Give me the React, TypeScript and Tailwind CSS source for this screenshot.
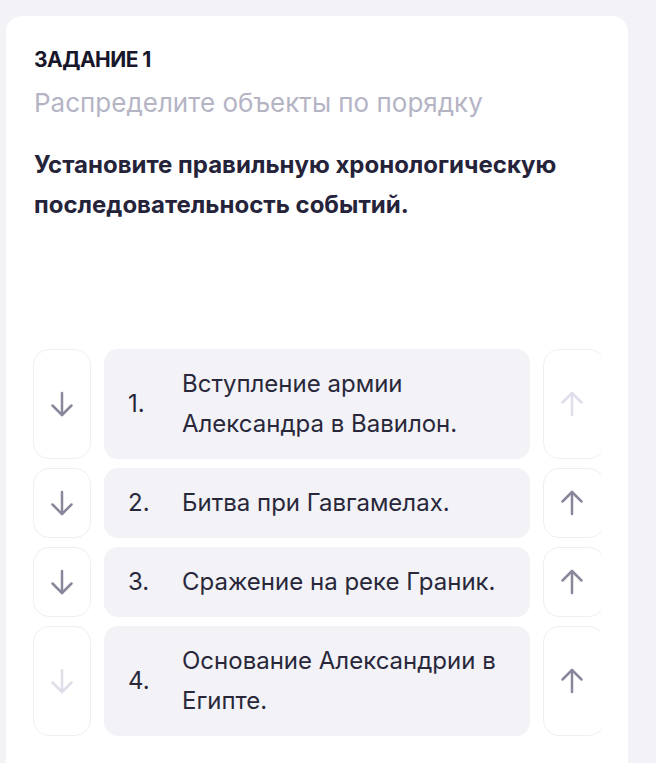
import React from 'react'

type Item = { id: number; text: string }

const items: Item[] = [
  { id: 1, text: 'Вступление армии Александра в Вавилон.' },
  { id: 2, text: 'Битва при Гавгамелах.' },
  { id: 3, text: 'Сражение на реке Граник.' },
  { id: 4, text: 'Основание Александрии в Египте.' },
]

function Arrow({ dir, disabled }: { dir: 'up' | 'down'; disabled: boolean }) {
  return (
    <svg
      width="24"
      height="26"
      viewBox="0 0 24 26"
      fill="none"
      stroke={disabled ? '#dfdee8' : '#88879c'}
      strokeWidth="2.5"
      strokeLinecap="round"
      strokeLinejoin="round"
      className={dir === 'up' ? 'rotate-180' : ''}
    >
      <path d="M12 2v22" />
      <path d="M2.5 14.5 12 24l9.5-9.5" />
    </svg>
  )
}

function MoveButton({ dir, disabled, wide }: { dir: 'up' | 'down'; disabled: boolean; wide?: boolean }) {
  return (
    <button
      type="button"
      disabled={disabled}
      className={
        wide
          ? 'flex w-[62px] shrink-0 items-center justify-center rounded-2xl border border-[#efeef4] bg-white pr-1'
          : 'flex w-[58px] shrink-0 items-center justify-center rounded-2xl border border-[#efeef4] bg-white'
      }
    >
      <Arrow dir={dir} disabled={disabled} />
    </button>
  )
}

export default function App() {
  return (
    <div className="min-h-screen bg-[#f2f2f7] pt-4 pl-[6px]" style={{ fontFamily: 'Inter, "Noto Sans", sans-serif' }}>
      <div className="w-[622px] rounded-t-2xl bg-white px-7 pt-8 pb-12">
        {/* Task header */}
        <h2 className="text-[21px] font-bold uppercase leading-6 tracking-tight text-[#17162a]">Задание 1</h2>
        <p className="mt-[15px] text-[26px] leading-8 text-[#b5b4c5]">Распределите объекты по порядку</p>
        <p className="mt-[26px] text-[24px] font-bold leading-10 text-[#24233a]">
          Установите правильную хронологическую последовательность событий.
        </p>

        {/* Sortable list */}
        <div className="mt-[124px] -ml-px flex w-[568px] flex-col gap-[9px] overflow-hidden">
          {items.map((item, i) => (
            <div key={item.id} className="flex gap-[13px]">
              <MoveButton dir="down" disabled={i === items.length - 1} />
              <div className="flex w-[426px] shrink-0 items-center rounded-[14px] bg-[#f2f2f7] py-[15px] pr-4 pl-6 text-[24px] leading-10 text-[#29283b]">
                <span className="w-[54px] shrink-0">{i + 1}.</span>
                <span>{item.text}</span>
              </div>
              <MoveButton dir="up" disabled={i === 0} wide />
            </div>
          ))}
        </div>
      </div>
    </div>
  )
}
